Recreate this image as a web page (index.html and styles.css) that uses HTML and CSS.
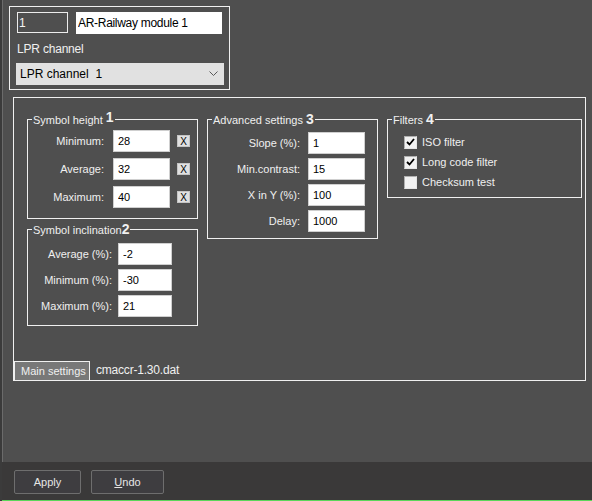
FILE: index.html
```html
<!DOCTYPE html>
<html lang="en">
<head>
    <meta charset="UTF-8">
    <title>AR-Railway module settings</title>
    <link rel="stylesheet" href="styles.css">
</head>
<body>
    <div class="window">
        <div class="content">
            <div class="module-box">
                <div class="module-row">
                    <input class="field-dark" type="text" value="1">
                    <input class="field-name" type="text" value="AR-Railway module 1">
                </div>
                <div class="module-label">LPR channel</div>
                <div class="select">
                    <span>LPR channel&nbsp; 1</span>
                    <svg width="9" height="6" viewBox="0 0 9 6"><polyline points="0.5,0.5 4.5,4.5 8.5,0.5" fill="none" stroke="#5a5a5a" stroke-width="1"/></svg>
                </div>
            </div>

            <div class="panel">
                <div class="groups">
                    <div class="column">
                        <fieldset class="group height">
                            <legend>Symbol height <b class="raised">1</b></legend>
                            <div class="row"><label>Minimum:</label><input type="text" value="28"><span class="xbtn">X</span></div>
                            <div class="row"><label>Average:</label><input type="text" value="32"><span class="xbtn">X</span></div>
                            <div class="row"><label>Maximum:</label><input type="text" value="40"><span class="xbtn">X</span></div>
                        </fieldset>
                        <fieldset class="group incline">
                            <legend>Symbol inclination<b>2</b></legend>
                            <div class="row"><label>Average (%):</label><input type="text" value="-2"></div>
                            <div class="row"><label>Minimum (%):</label><input type="text" value="-30"></div>
                            <div class="row"><label>Maximum (%):</label><input type="text" value="21"></div>
                        </fieldset>
                    </div>
                    <fieldset class="group advanced">
                        <legend>Advanced settings <b>3</b></legend>
                        <div class="row"><label>Slope (%):</label><input type="text" value="1"></div>
                        <div class="row"><label>Min.contrast:</label><input type="text" value="15"></div>
                        <div class="row"><label>X in Y (%):</label><input type="text" value="100"></div>
                        <div class="row"><label>Delay:</label><input type="text" value="1000"></div>
                    </fieldset>
                    <fieldset class="group filters">
                        <legend>Filters <b>4</b></legend>
                        <div class="check-row"><span class="check"><svg width="9" height="8" viewBox="0 0 9 8"><polyline points="1,4 3.5,6.5 8,1" fill="none" stroke="#000" stroke-width="1.8"/></svg></span>ISO filter</div>
                        <div class="check-row"><span class="check"><svg width="9" height="8" viewBox="0 0 9 8"><polyline points="1,4 3.5,6.5 8,1" fill="none" stroke="#000" stroke-width="1.8"/></svg></span>Long code filter</div>
                        <div class="check-row"><span class="check"></span>Checksum test</div>
                    </fieldset>
                </div>
                <div class="tabs">
                    <div class="tab active">Main settings</div>
                    <div class="tab">cmaccr-1.30.dat</div>
                </div>
            </div>
        </div>

        <div class="footer">
            <button class="btn apply">Apply</button>
            <button class="btn undo"><u>U</u>ndo</button>
        </div>
    </div>
</body>
</html>
```

FILE: styles.css
```css
* {
    box-sizing: border-box;
}

body {
    margin: 0;
    background-color: #4f4f4f;
    font-family: "Liberation Sans", Arial, sans-serif;
    font-size: 11px;
    color: #f0f0f0;
}

.window {
    width: 592px;
    height: 501px;
    display: flex;
    flex-direction: column;
    border-left: 2px solid #3b3b3b;
    box-shadow: inset 1px 0 #6b6b6b;
}

.content {
    flex: 1;
    padding-top: 6px;
}

/* module name + channel */
.module-box {
    width: 221px;
    height: 84px;
    margin-left: 7px;
    border: 1px solid #f0f0f0;
    padding: 5px 0 0 7px;
}

.module-row {
    display: flex;
    align-items: flex-start;
    gap: 8px;
}

.module-row input {
    font-family: "Liberation Sans", Arial, sans-serif;
    font-size: 12px;
    margin: 0;
    outline: none;
}

.field-dark {
    width: 51px;
    height: 21px;
    background-color: #4f4f4f;
    border: 1px solid #ececec;
    color: #f4f4f4;
    padding: 0 1px;
}

.field-name {
    width: 146px;
    height: 22px;
    background-color: #fff;
    border: none;
    color: #000;
    padding: 0 2px;
    letter-spacing: -0.3px;
}

.module-label {
    margin-top: 8px;
    font-size: 12px;
    line-height: 14px;
    letter-spacing: -0.2px;
}

.select {
    margin: 7px 0 0 -1px;
    width: 208px;
    height: 22px;
    background-color: #e1e1e1;
    color: #000;
    font-size: 12px;
    display: flex;
    align-items: center;
    justify-content: space-between;
    padding: 0 6px 0 4px;
}

/* main panel */
.panel {
    width: 573px;
    height: 284px;
    margin: 7px 0 0 11px;
    border: 1px solid #f0f0f0;
    display: flex;
    flex-direction: column;
}

.groups {
    display: flex;
    align-items: flex-start;
    gap: 9px;
    padding: 13px 0 0 13px;
}

.column {
    display: flex;
    flex-direction: column;
}

.group {
    margin: 0;
    border: 1px solid #f0f0f0;
    padding: 0 4px;
    min-width: 0;
}

.group legend {
    padding: 0 1px;
    height: 16px;
    line-height: 16px;
}

.group legend b {
    font-size: 14px;
}

.group legend .raised {
    position: relative;
    top: -2px;
}

.row {
    display: flex;
    align-items: center;
    height: 22px;
}

.row label {
    text-align: right;
}

.row input {
    height: 22px;
    margin: 0;
    border: 1px solid #cfcfcf;
    background-color: #fff;
    color: #000;
    font-family: "Liberation Sans", Arial, sans-serif;
    font-size: 11px;
    padding: 0 4px;
    outline: none;
}

.xbtn {
    width: 13px;
    height: 12px;
    margin-left: 7px;
    background-color: #e0e0e0;
    border: 1px solid #c4c4c4;
    color: #000;
    font-size: 10px;
    line-height: 11px;
    text-align: center;
}

.height {
    width: 171px;
    padding-top: 3px;
    padding-bottom: 10px;
}

.height .row + .row {
    margin-top: 6px;
}

.height label {
    width: 72px;
    margin-right: 9px;
}

.height input {
    width: 57px;
}

.incline {
    width: 171px;
    margin-top: 2px;
    padding-top: 6px;
    padding-bottom: 8px;
}

.incline .row + .row {
    margin-top: 4px;
}

.incline label {
    width: 80px;
    margin-right: 6px;
}

.incline input {
    width: 54px;
}

.advanced {
    width: 171px;
    padding-top: 5px;
    padding-bottom: 6px;
}

.advanced .row + .row {
    margin-top: 4px;
}

.advanced label {
    width: 88px;
    margin-right: 8px;
}

.advanced input {
    width: 57px;
}

.filters {
    width: 195px;
    padding-top: 5px;
    padding-bottom: 5px;
}

.check-row {
    display: flex;
    align-items: center;
    height: 20px;
    padding-left: 12px;
}

.check {
    width: 13px;
    height: 13px;
    margin-right: 5px;
    background-color: #f2f2f2;
    border: 1px solid #b0b0b0;
    border-right-color: #e6e6e6;
    border-bottom-color: #e6e6e6;
    display: flex;
    align-items: center;
    justify-content: center;
}

/* tabs along the bottom of the panel */
.tabs {
    margin-top: auto;
    display: flex;
    height: 19px;
}

.tab {
    line-height: 18px;
    font-size: 11px;
    white-space: nowrap;
}

.tab.active {
    width: 76px;
    background-color: #787878;
    border: 1px solid #f0f0f0;
    border-bottom: none;
    padding-left: 6px;
}

.tab + .tab {
    margin-left: 6px;
    font-size: 12px;
    letter-spacing: -0.2px;
}

/* footer */
.footer {
    height: 39px;
    background-color: #3a3939;
    border-bottom: 1px solid #5ad65a;
    padding: 8px 0 0 12px;
    display: flex;
    align-items: flex-start;
    gap: 10px;
}

.btn {
    height: 24px;
    background-color: #3e3d40;
    border: 1px solid #6e6e6e;
    border-radius: 2px;
    color: #e6e6e6;
    font-family: "Liberation Sans", Arial, sans-serif;
    font-size: 11px;
    padding: 0;
}

.apply {
    width: 67px;
}

.undo {
    width: 73px;
}
```
